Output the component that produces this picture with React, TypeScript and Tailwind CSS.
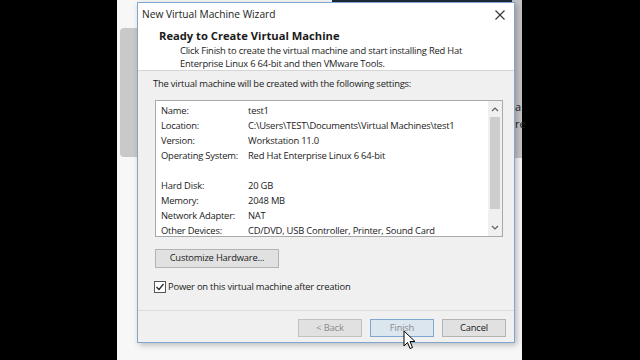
const rows: [string, string][] = [
  ["Name:", "test1"],
  ["Location:", "C:\\Users\\TEST\\Documents\\Virtual Machines\\test1"],
  ["Version:", "Workstation 11.0"],
  ["Operating System:", "Red Hat Enterprise Linux 6 64-bit"],
  ["", ""],
  ["Hard Disk:", "20 GB"],
  ["Memory:", "2048 MB"],
  ["Network Adapter:", "NAT"],
  ["Other Devices:", "CD/DVD, USB Controller, Printer, Sound Card"],
];

function Cursor() {
  return (
    <svg width="14" height="20" viewBox="0 0 14 20" className="absolute left-[286px] top-[330px]">
      <path d="M1 1 L1 16 L4.5 12.5 L7 18.5 L9.5 17.5 L7 11.5 L12 11.5 Z" fill="#fff" stroke="#000" strokeWidth="1" strokeLinejoin="round" />
    </svg>
  );
}

function Wizard() {
  return (
    <div className="absolute left-[20px] top-[2px] w-[378px] h-[341px] border border-[#7fa6cf] bg-[#f0f0f0] flex flex-col shadow-[2px_2px_6px_rgba(0,0,0,0.25)] text-[#1b1b1b] tracking-[-0.2px]">
      {/* title bar */}
      <div className="h-[23px] bg-white flex items-center justify-between pl-[4px] pr-[9px] text-[10.2px] tracking-normal">
        <span>New Virtual Machine Wizard</span>
        <svg width="10" height="10" viewBox="0 0 10 10">
          <path d="M0.5 0.5 L9.5 9.5 M9.5 0.5 L0.5 9.5" stroke="#333" strokeWidth="1.1" />
        </svg>
      </div>

      {/* header */}
      <div className="h-[45px] bg-white border-b border-[#d5d5d5] pl-[21px] pt-[2px]">
        <div className="font-bold text-[11.2px] leading-[16px] tracking-normal">Ready to Create Virtual Machine</div>
        <div className="pl-[21px] text-[9.4px] leading-[13px]">
          Click Finish to create the virtual machine and start installing Red Hat
          <br />
          Enterprise Linux 6 64-bit and then VMware Tools.
        </div>
      </div>

      {/* body */}
      <div className="flex-1 flex flex-col pl-[15px] pr-[11px] pt-[6px] text-[9.4px]">
        <div className="leading-[13px]">The virtual machine will be created with the following settings:</div>

        <div className="mt-[10px] ml-[2px] h-[137px] bg-white border border-[#a9a9a9] flex">
          <div className="flex-1 pl-[5px] pt-[3px]">
            {rows.map(([k, v], i) => (
              <div key={i} className="flex h-[15px] items-center">
                <span className="w-[87px]">{k}</span>
                <span>{v}</span>
              </div>
            ))}
          </div>
          <div className="w-[14px] bg-[#f0f0f0] flex flex-col items-center">
            <svg width="8" height="16" viewBox="0 0 8 16">
              <path d="M1 10 L4 7 L7 10" fill="none" stroke="#606060" strokeWidth="1.2" />
            </svg>
            <div className="w-[10px] h-[92px] bg-[#cdcdcd]"></div>
            <div className="flex-1"></div>
            <svg width="8" height="16" viewBox="0 0 8 16">
              <path d="M1 6 L4 9 L7 6" fill="none" stroke="#606060" strokeWidth="1.2" />
            </svg>
          </div>
        </div>

        <button className="mt-[12px] ml-[2px] w-[124px] h-[19px] bg-[#e1e1e1] border border-[#b4b4b4] text-[9.4px]">
          Customize Hardware...
        </button>

        <div className="mt-[12px] flex items-center gap-[2px] ml-[1px]">
          <div className="w-[12px] h-[12px] border border-[#555] bg-white flex items-center justify-center">
            <svg width="10" height="10" viewBox="0 0 10 10">
              <path d="M1.5 5 L4 7.5 L8.5 2" fill="none" stroke="#222" strokeWidth="1.2" />
            </svg>
          </div>
          <span>Power on this virtual machine after creation</span>
        </div>
      </div>

      {/* footer */}
      <div className="h-[32px] border-t border-[#dcdcdc] flex items-start justify-end gap-[8px] pr-[8px] pt-[8px] text-[9.4px]">
        <button className="w-[64px] h-[18px] bg-[#e1e1e1] border border-[#c2c2c2] text-[#8a8a8a]">&lt; Back</button>
        <button className="w-[64px] h-[18px] bg-[#dce6ef] border border-[#7fa7cf] text-[#8a8a8a]">Finish</button>
        <button className="w-[64px] h-[18px] bg-[#e1e1e1] border border-[#b4b4b4]">Cancel</button>
      </div>
    </div>
  );
}

export default function App() {
  return (
    <div className="w-[640px] h-[360px] bg-black flex font-['Open_Sans',sans-serif] overflow-hidden">
      <div className="w-[117px]"></div>
      <div className="relative w-[405px] h-full bg-[#f7f7f7]">
        {/* background window bits */}
        <div className="absolute left-[3px] top-[28px] w-[30px] h-[129px] rounded-[4px] bg-[#c9c9c9]"></div>
        <div className="absolute left-[380px] top-[0px] w-[25px] h-[158px] bg-[#c4c4c4]"></div>
        <div className="absolute left-[398px] top-[98px] text-[11px] leading-[17px] text-[#222]">
          a<br />re
        </div>
        <div className="absolute left-[215px] top-[-10px] w-[180px] h-[13px] bg-[#1d2a3a]"></div>
        <Wizard />
        <Cursor />
      </div>
      <div className="flex-1"></div>
    </div>
  );
}
